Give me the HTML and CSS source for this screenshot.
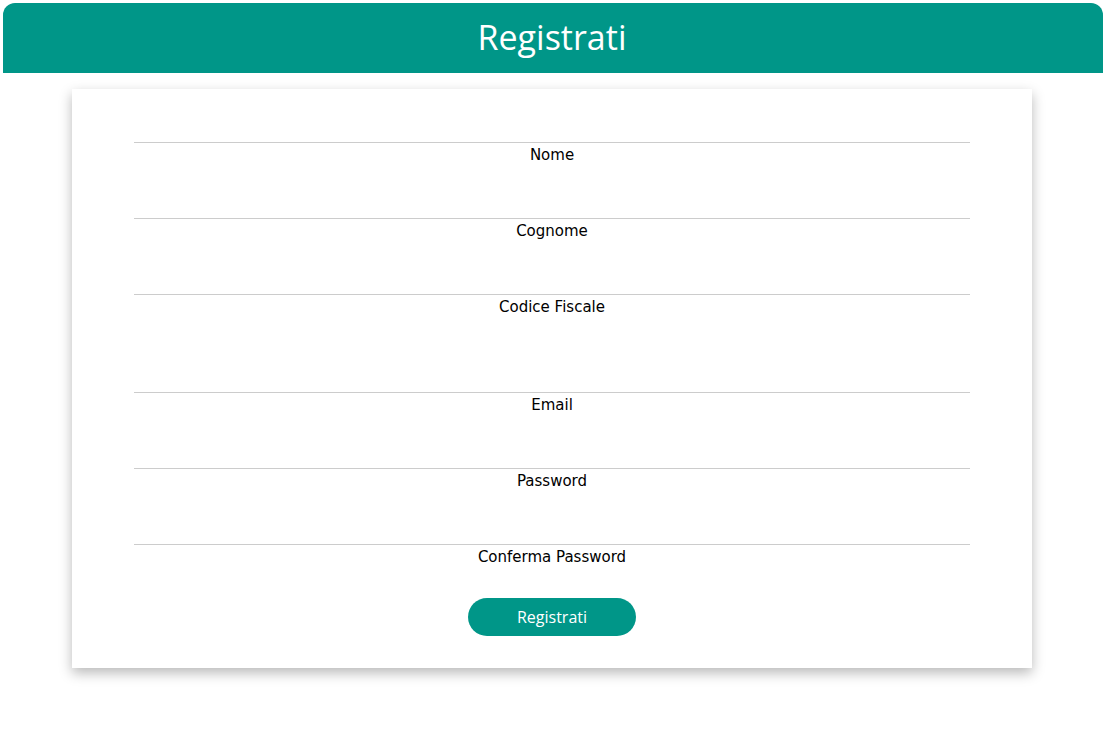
FILE: index.html
```html
<!DOCTYPE html>
<html lang="it">
<head>
<meta charset="utf-8">
<title>Registrati</title>
<link rel="stylesheet" href="styles.css">
</head>
<body>
<header class="topbar">
  <h1 class="topbar-title">Registrati</h1>
</header>
<main class="card">
  <form class="form">
    <div class="field"><label class="field-label">Nome</label></div>
    <div class="field"><label class="field-label">Cognome</label></div>
    <div class="field field-tall"><label class="field-label">Codice Fiscale</label></div>
    <div class="field"><label class="field-label">Email</label></div>
    <div class="field"><label class="field-label">Password</label></div>
    <div class="field field-last"><label class="field-label">Conferma Password</label></div>
    <div class="actions"><button type="button" class="btn">Registrati</button></div>
  </form>
</main>
</body>
</html>
```
FILE: styles.css
```css
html, body {
  margin: 0;
  padding: 0;
  background: #ffffff;
}
body {
  padding: 3px 3px 40px;
}
.topbar {
  height: 70px;
  background: #009688;
  border-radius: 12px 12px 0 0;
  display: flex;
  align-items: center;
  justify-content: center;
}
.topbar-title {
  margin: 0;
  font-family: "Open Sans", sans-serif;
  font-weight: 400;
  font-size: 34px;
  color: #ffffff;
  line-height: 1;
  padding-bottom: 2px;
  padding-right: 2px;
}
.card {
  width: 960px;
  box-sizing: border-box;
  margin: 16px 0 0 69px;
  padding: 53px 62px 32px;
  background: #ffffff;
  box-shadow: 0 5px 12px rgba(0, 0, 0, 0.28);
}
.form {
  display: flex;
  flex-direction: column;
}
.field {
  height: 76px;
  box-sizing: border-box;
  border-top: 1px solid #cccccc;
  text-align: center;
  padding-top: 3px;
}
.field-tall {
  height: 98px;
}
.field-last {
  height: 54px;
}
.field-label {
  font-family: "DejaVu Sans", Verdana, sans-serif;
  font-size: 15px;
  line-height: 18px;
  color: #000000;
}
.actions {
  display: flex;
  justify-content: center;
}
.btn {
  width: 168px;
  height: 38px;
  border: none;
  border-radius: 19px;
  background: #009688;
  color: #ffffff;
  font-family: "Open Sans", sans-serif;
  font-size: 16px;
  padding: 0 0 1px;
  cursor: pointer;
}
```
